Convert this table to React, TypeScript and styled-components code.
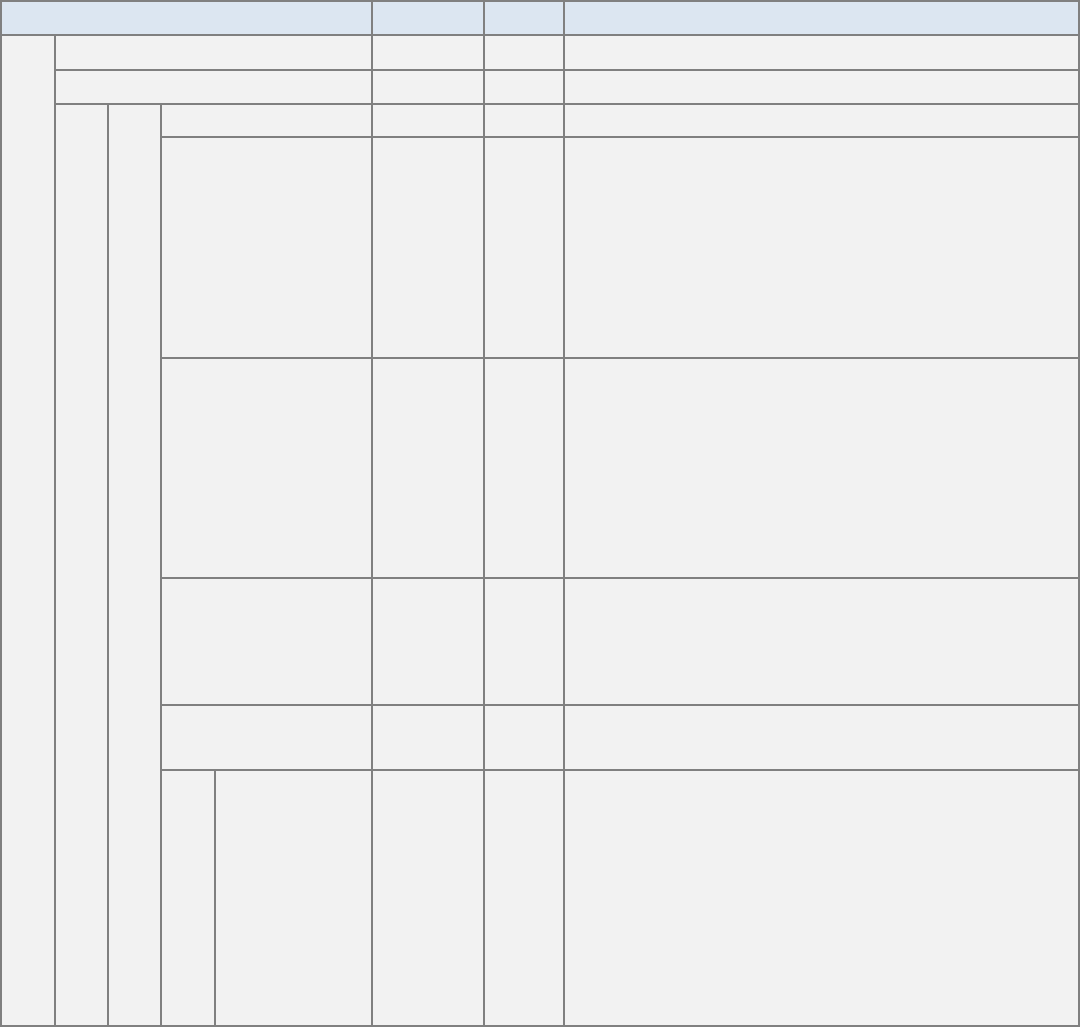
import styled, { createGlobalStyle } from "styled-components";

const GlobalStyle = createGlobalStyle`
  html, body {
    margin: 0;
    padding: 0;
    background: #ffffff;
    font-family: "Liberation Sans", Arial, sans-serif;
  }
`;

// column widths (content box), lines are 2px border-spacing
const columns = [52, 51, 51, 52, 155, 110, 78, 513];

export default function App() {
  return (
    <>
      <GlobalStyle />
      <Grid>
        <colgroup>
          {columns.map((w, i) => (
            <col key={i} style={{ width: w }} />
          ))}
        </colgroup>
        <thead>
          <Row $h={32}>
            <HeadCell colSpan={5}></HeadCell>
            <HeadCell></HeadCell>
            <HeadCell></HeadCell>
            <HeadCell></HeadCell>
          </Row>
        </thead>
        <tbody>
          <Row $h={33}>
            <Cell rowSpan={8}></Cell>
            <Cell colSpan={4}></Cell>
            <Cell></Cell>
            <Cell></Cell>
            <Cell></Cell>
          </Row>
          <Row $h={32}>
            <Cell colSpan={4}></Cell>
            <Cell></Cell>
            <Cell></Cell>
            <Cell></Cell>
          </Row>
          <Row $h={31}>
            <Cell rowSpan={6}></Cell>
            <Cell rowSpan={6}></Cell>
            <Cell colSpan={2}></Cell>
            <Cell></Cell>
            <Cell></Cell>
            <Cell></Cell>
          </Row>
          {[219, 218, 125, 63].map((h) => (
            <Row key={h} $h={h}>
              <Cell colSpan={2}></Cell>
              <Cell></Cell>
              <Cell></Cell>
              <Cell></Cell>
            </Row>
          ))}
          <Row $h={254}>
            <Cell></Cell>
            <Cell></Cell>
            <Cell></Cell>
            <Cell></Cell>
            <Cell></Cell>
          </Row>
        </tbody>
      </Grid>
    </>
  );
}

const Grid = styled.table`
  width: 1080px;
  table-layout: fixed;
  border-collapse: separate;
  border-spacing: 2px;
  background: #808080;
  border: 0;
`;

const Row = styled.tr<{ $h: number }>`
  height: ${(p) => p.$h}px;

  th,
  td {
    height: ${(p) => p.$h}px;
  }
`;

const Cell = styled.td`
  background: #f2f2f2;
  padding: 0;
  border: 0;
`;

const HeadCell = styled.th`
  background: #dce6f1;
  padding: 0;
  border: 0;
  font-weight: normal;
`;
